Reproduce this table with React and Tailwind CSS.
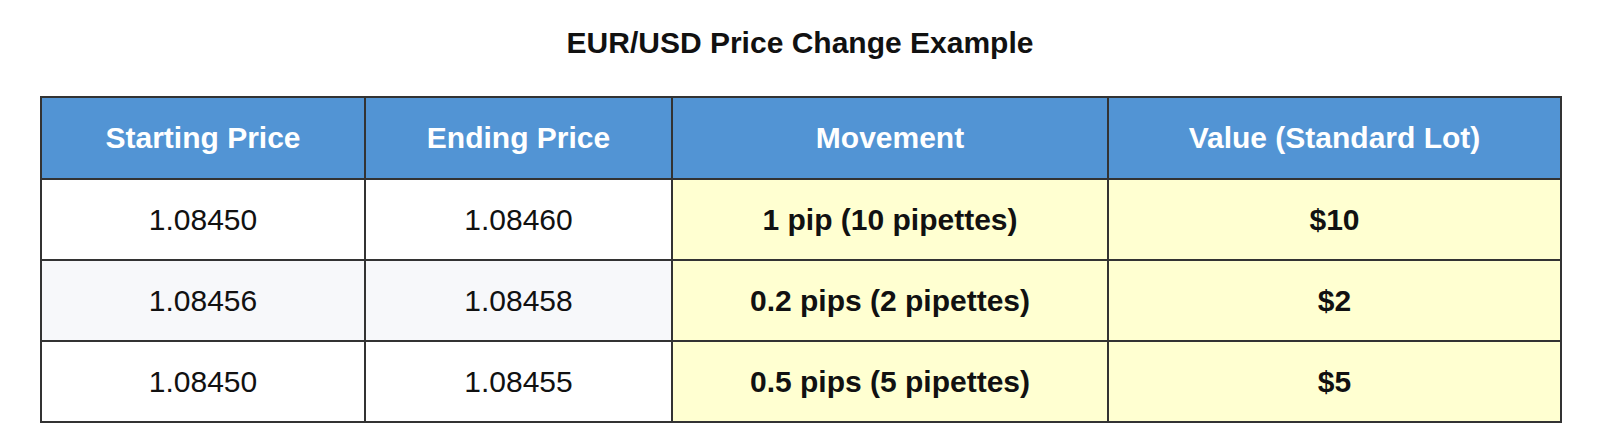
const ROWS = [
  { start: '1.08450', end: '1.08460', move: '1 pip (10 pipettes)', value: '$10' },
  { start: '1.08456', end: '1.08458', move: '0.2 pips (2 pipettes)', value: '$2' },
  { start: '1.08450', end: '1.08455', move: '0.5 pips (5 pipettes)', value: '$5' },
];

const HEADERS = ['Starting Price', 'Ending Price', 'Movement', 'Value (Standard Lot)'];

export default function App() {
  return (
    <div className="bg-white min-h-[447px] px-10 pt-[25px] font-['Liberation_Sans',Arial,sans-serif] text-[#111]">
      <h2 className="text-center text-[30px] leading-[35px] font-bold mb-[36px]">
        EUR/USD Price Change Example
      </h2>

      <table className="w-full table-fixed border-collapse border-2 border-[#333] text-[30px] leading-[34px]">
        <colgroup>
          <col className="w-[324px]" />
          <col className="w-[307px]" />
          <col className="w-[436px]" />
          <col className="w-[453px]" />
        </colgroup>
        <thead>
          <tr className="bg-[#5294d4] text-white">
            {HEADERS.map((h) => (
              <th key={h} className="border-2 border-[#333] py-[23px] px-3 font-bold text-center">
                {h}
              </th>
            ))}
          </tr>
        </thead>
        <tbody>
          {ROWS.map((r, i) => (
            <tr key={i} className={i === 1 ? 'bg-[#f7f8fa]' : 'bg-white'}>
              <td className="border-2 border-[#333] py-[22.5px] px-3 text-center">{r.start}</td>
              <td className="border-2 border-[#333] py-[22.5px] px-3 text-center">{r.end}</td>
              <td className="border-2 border-[#333] py-[22.5px] px-3 text-center font-bold bg-[#ffffd1]">{r.move}</td>
              <td className="border-2 border-[#333] py-[22.5px] px-3 text-center font-bold bg-[#ffffd1]">{r.value}</td>
            </tr>
          ))}
        </tbody>
      </table>
    </div>
  );
}
